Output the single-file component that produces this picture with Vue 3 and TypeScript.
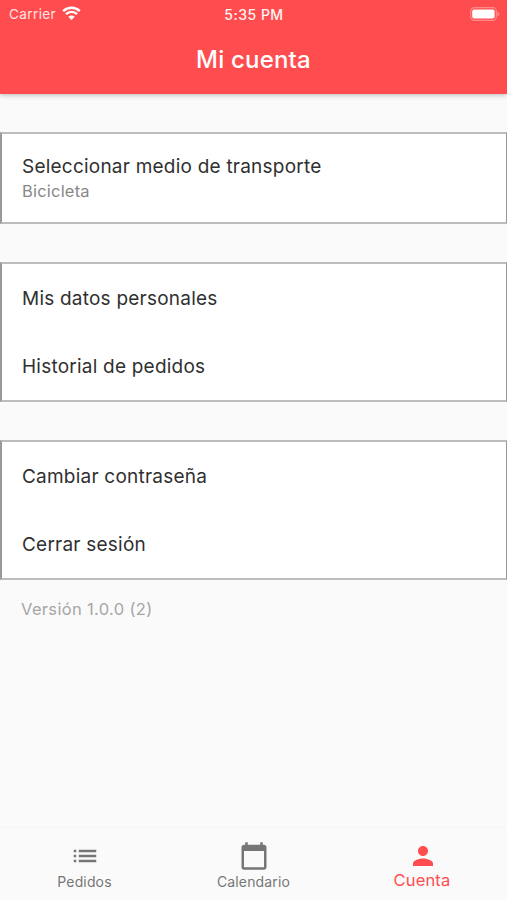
<script setup lang="ts">
interface Item {
  title: string
  subtitle?: string
}

interface Tab {
  label: string
  path: string
  active?: boolean
}

const groups: Item[][] = [
  [{ title: 'Seleccionar medio de transporte', subtitle: 'Bicicleta' }],
  [{ title: 'Mis datos personales' }, { title: 'Historial de pedidos' }],
  [{ title: 'Cambiar contraseña' }, { title: 'Cerrar sesión' }],
]

const tabs: Tab[] = [
  {
    label: 'Pedidos',
    path: 'M3 13h2v-2H3v2zm0 4h2v-2H3v2zm0-8h2V7H3v2zm4 4h14v-2H7v2zm0 4h14v-2H7v2zM7 7v2h14V7H7z',
  },
  {
    label: 'Calendario',
    path: 'M20 3h-1V1h-2v2H7V1H5v2H4c-1.1 0-2 .9-2 2v16c0 1.1.9 2 2 2h16c1.1 0 2-.9 2-2V5c0-1.1-.9-2-2-2zm0 18H4V8h16v13z',
  },
  {
    label: 'Cuenta',
    path: 'M12 12c2.21 0 4-1.79 4-4s-1.79-4-4-4-4 1.79-4 4 1.79 4 4 4zm0 2c-2.67 0-8 1.34-8 4v2h16v-2c0-2.66-5.33-4-8-4z',
    active: true,
  },
]
</script>

<template>
  <div class="screen">
    <header class="app-bar">
      <div class="status">
        <div class="carrier">
          <span>Carrier</span>
          <svg class="wifi" viewBox="0 0 18 14" aria-hidden="true">
            <path d="M1 4.9A11.6 11.6 0 0 1 17 4.9" />
            <path d="M3.7 7.8A7.6 7.6 0 0 1 14.3 7.8" />
            <path class="dot" d="M9 13.6L5.9 10.4A4.4 4.4 0 0 1 12.1 10.4Z" />
          </svg>
        </div>
        <span class="time">5:35 PM</span>
        <svg class="battery" viewBox="0 0 30 14" aria-hidden="true">
          <rect class="shell" x="0.7" y="0.7" width="25.6" height="12.6" rx="3.6" />
          <rect class="charge" x="2.2" y="2.4" width="22.4" height="9.2" rx="2" />
          <path class="cap" d="M27.4 4.6c1.2.5 1.9 1.3 1.9 2.4s-.7 1.9-1.9 2.4z" />
        </svg>
      </div>
      <h1 class="title">Mi cuenta</h1>
    </header>

    <main class="content">
      <section v-for="(group, i) in groups" :key="i" class="card">
        <div v-for="item in group" :key="item.title" class="row" :class="{ double: item.subtitle }">
          <span class="row-title">{{ item.title }}</span>
          <span v-if="item.subtitle" class="row-subtitle">{{ item.subtitle }}</span>
        </div>
      </section>
      <p class="version">Versión 1.0.0 (2)</p>
    </main>

    <nav class="tab-bar">
      <div v-for="tab in tabs" :key="tab.label" class="tab" :class="{ active: tab.active }">
        <svg class="tab-icon" viewBox="0 0 24 24" aria-hidden="true"><path :d="tab.path" /></svg>
        <span class="tab-label">{{ tab.label }}</span>
      </div>
    </nav>
  </div>
</template>

<style>
body {
  margin: 0;
}
</style>

<style scoped>
.screen {
  display: flex;
  flex-direction: column;
  height: 900px;
  background: #fafafa;
  font-family: Inter, Roboto, sans-serif;
  color: #303030;
}

.app-bar {
  flex: none;
  height: 94px;
  background: #ff4d4f;
  color: #fff;
  box-shadow: 0 1px 5px rgba(0, 0, 0, 0.26);
}

.status {
  display: grid;
  grid-template-columns: 1fr auto 1fr;
  align-items: center;
  height: 27px;
  padding: 0 7px 0 9px;
  font-size: 13.5px;
  line-height: 27px;
}

.carrier {
  display: flex;
  align-items: center;
  gap: 5.5px;
  color: #ffe3e3;
  letter-spacing: 0.4px;
}

.carrier span {
  padding-top: 1px;
}

.wifi {
  width: 19px;
  height: 14.5px;
  margin-bottom: 2px;
  fill: none;
  stroke: #fff;
  stroke-width: 2.3;
}

.wifi .dot {
  fill: #fff;
  stroke: none;
}

.time {
  margin-right: 1px;
  font-size: 14px;
  font-weight: 500;
  letter-spacing: 0.5px;
  color: #fff4f4;
}

.battery {
  justify-self: end;
  width: 30px;
  height: 14px;
  margin-bottom: 1px;
}

.shell {
  fill: none;
  stroke: #ff8a8b;
  stroke-width: 1.2;
}

.charge {
  fill: #fff;
}

.cap {
  fill: #ff8a8b;
}

.title {
  margin: 0;
  font-size: 24px;
  font-weight: 500;
  line-height: 66px;
  text-align: center;
  letter-spacing: 0.2px;
}

.content {
  flex: 1;
  display: flex;
  flex-direction: column;
  gap: 38px;
  padding-top: 38px;
}

.card {
  box-sizing: border-box;
  display: flex;
  flex-direction: column;
  gap: 1px;
  background: #fff;
  border: 2px solid #bcbcbc;
  border-left-color: #999;
  border-right: 1px solid #999;
}

.row {
  box-sizing: border-box;
  display: flex;
  flex-direction: column;
  justify-content: center;
  height: 67.5px;
  padding: 2px 20px 0;
}

.row.double {
  height: 87px;
  margin-bottom: 1px;
}

.row-title {
  font-size: 19px;
  line-height: 26px;
  letter-spacing: 0.22px;
}

.row-subtitle {
  margin-bottom: 1px;
  font-size: 16.5px;
  line-height: 22px;
  letter-spacing: 0.2px;
  color: #888;
}

.version {
  margin: -19px 0 0 21px;
  font-size: 16.5px;
  line-height: 20px;
  letter-spacing: 0.33px;
  color: #a6a6a6;
}

.tab-bar {
  flex: none;
  display: grid;
  grid-template-columns: repeat(3, 1fr);
  height: 72px;
  background: #fafafa;
  box-shadow: 0 0 2px rgba(0, 0, 0, 0.06);
}

.tab {
  display: flex;
  flex-direction: column;
  align-items: center;
  padding-top: 13px;
  color: #767676;
}

.tab-icon {
  width: 30px;
  height: 30px;
  fill: currentColor;
}

.tab-label {
  padding-top: 1px;
  font-size: 14px;
  line-height: 20px;
  letter-spacing: 0.15px;
}

.active {
  color: #ff4d4f;
}

.active .tab-label {
  padding: 0 1px 0 0;
  font-size: 16.5px;
  line-height: 19px;
}
</style>
